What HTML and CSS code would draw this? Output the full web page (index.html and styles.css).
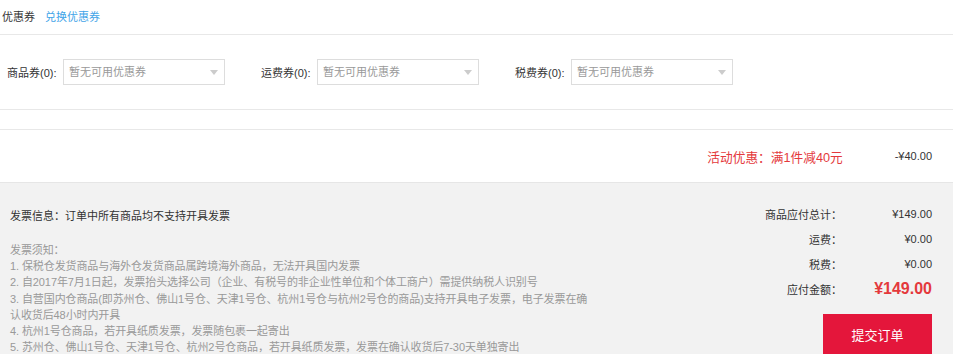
FILE: index.html
```html
<!DOCTYPE html>
<html lang="zh-CN">
<head>
    <meta charset="UTF-8">
    <title>订单结算</title>
    <link rel="stylesheet" href="styles.css">
</head>
<body>
    <div class="checkout">
        <!-- Coupons -->
        <div class="coupon-head">
            <span class="coupon-title">优惠券</span>
            <a class="coupon-link" href="#">兑换优惠券</a>
        </div>
        <div class="coupon-row">
            <div class="coupon-field">
                <label>商品券(0):</label>
                <div class="select">暂无可用优惠券<span class="arrow"></span></div>
            </div>
            <div class="coupon-field">
                <label>运费券(0):</label>
                <div class="select">暂无可用优惠券<span class="arrow"></span></div>
            </div>
            <div class="coupon-field">
                <label>税费券(0):</label>
                <div class="select">暂无可用优惠券<span class="arrow"></span></div>
            </div>
        </div>
        <div class="spacer"></div>

        <!-- Promotion -->
        <div class="promo-row">
            <span class="promo-text">活动优惠：满1件减40元</span>
            <span class="promo-value">-¥40.00</span>
        </div>

        <!-- Invoice and totals -->
        <div class="summary">
            <div class="invoice">
                <div class="invoice-title">发票信息：订单中所有商品均不支持开具发票</div>
                <div class="invoice-notes">
                    发票须知：<br>
                    1. 保税仓发货商品与海外仓发货商品属跨境海外商品，无法开具国内发票<br>
                    2. 自2017年7月1日起，发票抬头选择公司（企业、有税号的非企业性单位和个体工商户）需提供纳税人识别号<br>
                    3. 自营国内仓商品(即苏州仓、佛山1号仓、天津1号仓、杭州1号仓与杭州2号仓的商品)支持开具电子发票，电子发票在确<br>
                    认收货后48小时内开具<br>
                    4. 杭州1号仓商品，若开具纸质发票，发票随包裹一起寄出<br>
                    5. 苏州仓、佛山1号仓、天津1号仓、杭州2号仓商品，若开具纸质发票，发票在确认收货后7-30天单独寄出
                </div>
            </div>
            <div class="totals">
                <div class="total-row"><span class="total-label">商品应付总计：</span><span class="total-value">¥149.00</span></div>
                <div class="total-row"><span class="total-label">运费：</span><span class="total-value">¥0.00</span></div>
                <div class="total-row"><span class="total-label">税费：</span><span class="total-value">¥0.00</span></div>
                <div class="total-row"><span class="total-label">应付金额：</span><span class="total-value pay">¥149.00</span></div>
                <button class="submit-btn">提交订单</button>
            </div>
        </div>
    </div>
</body>
</html>
```

FILE: styles.css
```css
body {
    margin: 0;
    font-family: "Liberation Sans", "Noto Sans CJK SC", sans-serif;
    font-size: 11px;
    color: #333;
    background: #fff;
}

.checkout {
    width: 953px;
}

.coupon-head {
    height: 35px;
    padding-left: 2px;
    display: flex;
    align-items: center;
    border-bottom: 1px solid #e8e8e8;
    box-sizing: border-box;
    padding-bottom: 3px;
}

.coupon-title {
    color: #333;
}

.coupon-link {
    color: #3fa4e8;
    text-decoration: none;
    margin-left: 10px;
}

.coupon-row {
    height: 75px;
    display: flex;
    align-items: center;
    padding-left: 7px;
    border-bottom: 1px solid #e8e8e8;
    box-sizing: border-box;
}

.coupon-field {
    display: flex;
    align-items: center;
    width: 254px;
}

.coupon-field label {
    width: 56px;
}

.select {
    position: relative;
    width: 162px;
    height: 26px;
    box-sizing: border-box;
    border: 1px solid #ddd;
    color: #999;
    line-height: 24px;
    padding-left: 5px;
}

.arrow {
    position: absolute;
    right: 6px;
    top: 10px;
    border-left: 4px solid transparent;
    border-right: 4px solid transparent;
    border-top: 5px solid #ccc;
}

.spacer {
    height: 19px;
    border-bottom: 1px solid #e8e8e8;
}

.promo-row {
    height: 52px;
    display: flex;
    align-items: center;
    justify-content: flex-end;
    padding-right: 21px;
}

.promo-text {
    color: #e4393c;
    font-size: 12.7px;
    margin-right: 52px;
}

.promo-value {
    color: #333;
}

.summary {
    background: #f2f2f2;
    border-top: 1px solid #e6e6e6;
    display: flex;
    justify-content: space-between;
    padding: 18px 21px 0 10px;
    height: 172px;
}

.invoice {
    padding-top: 4px;
}

.invoice-title {
    line-height: 22px;
    color: #333;
}

.invoice-notes {
    margin-top: 15px;
    color: #999;
    line-height: 16.2px;
    letter-spacing: -0.1px;
}

.totals {
    display: flex;
    flex-direction: column;
    align-items: flex-end;
}

.total-row {
    display: flex;
    align-items: center;
    height: 25px;
}

.total-label {
    text-align: right;
    color: #333;
}

.total-value {
    width: 90px;
    text-align: right;
}

.total-value.pay {
    color: #e4393c;
    font-size: 16px;
    font-weight: bold;
}

.submit-btn {
    margin-top: 13px;
    width: 109px;
    height: 40px;
    border: none;
    background: #e4163b;
    color: #fff;
    font-family: inherit;
    font-size: 13px;
    cursor: pointer;
}
```
